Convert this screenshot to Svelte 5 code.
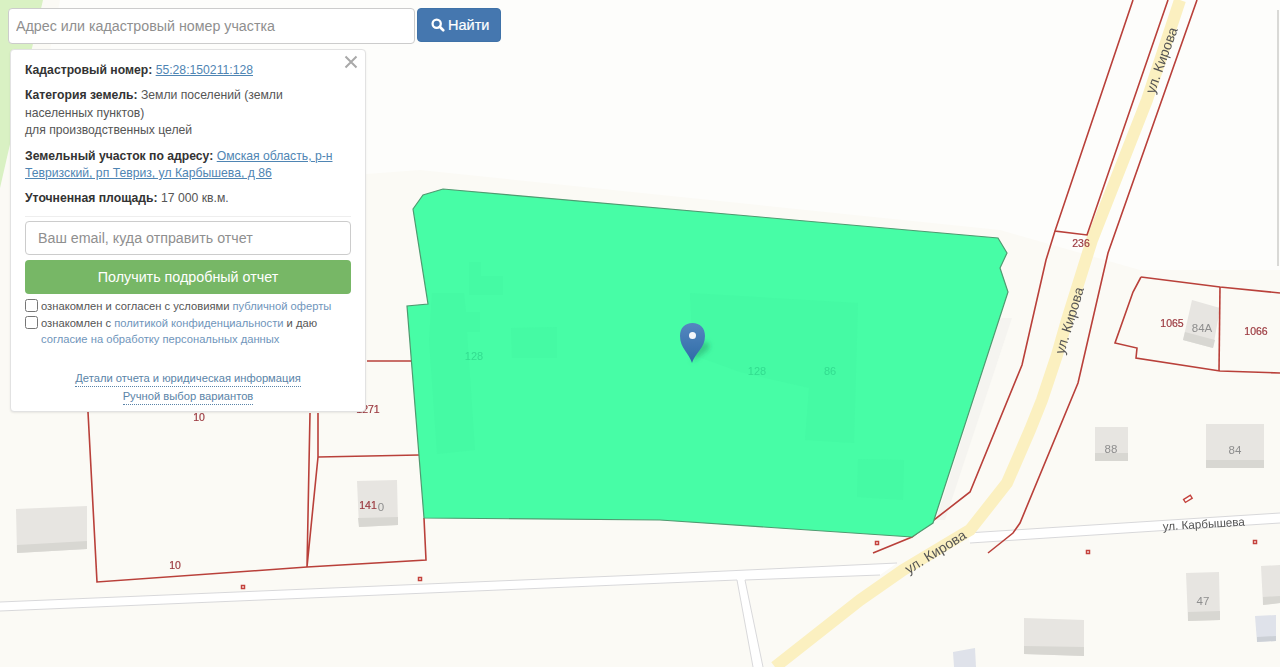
<script>
  const parcels = [
    '1133,0 1055,231 1087,235 1168,0',
    '1055,231 1046,260 1022,365 970,492 912,537 873,553',
    '1197,0 1108,253 1078,383 1020,523 1013,533 988,553',
    '1141,277 1220,287 1280,293',
    '1141,277 1133,292 1115,343 1137,348 1136,358 1220,371 1280,373',
    '1220,287 1219,371',
    '88,412 97,582 307,567 426,560 424,518',
    '310,413 307,567 318,457 318,413',
    '318,457 419,455',
    '367,361 413,361'
  ];
  const buildings = [
    { top: '1192,300 1220,308 1213,348 1183,340', strip: '1185,332 1215,340 1213,348 1183,340' },
    { top: '1095,427 1128,427 1128,461 1095,461', strip: '1095,453 1128,453 1128,461 1095,461' },
    { top: '1206,424 1264,424 1264,468 1206,468', strip: '1206,460 1264,460 1264,468 1206,468' },
    { top: '1186,573 1219,572 1220,620 1188,621', strip: '1188,612 1220,611 1220,620 1188,621' },
    { top: '1261,566 1280,565 1280,603 1263,605', strip: '1263,597 1280,596 1280,603 1263,605' },
    { top: '1024,618 1084,620 1084,656 1024,654', strip: '1024,646 1084,647 1084,656 1024,654' },
    { top: '16,509 87,506 87,549 17,553', strip: '17,545 87,541 87,549 17,553' },
    { top: '357,481 397,480 398,525 359,527', strip: '358,518 398,517 398,525 359,527' }
  ];
  const bluish = [
    { top: '1255,616 1276,615 1276,641 1257,642', strip: '1257,637 1276,636 1276,641 1257,642' },
    { top: '953,652 975,648 976,667 954,667', strip: '' }
  ];
  const ghosts = [
    '469,262 481,262 481,276 503,276 503,295 469,295',
    '432,293 464,293 466,312 480,312 480,332 467,332 475,450 437,454 429,340',
    '511,328 557,327 557,358 512,358',
    '690,293 858,303 854,443 805,440 809,388 740,372 693,355',
    '858,459 904,460 903,500 857,497'
  ];
  const marks = [[243, 587], [420, 579], [877, 543], [1088, 552], [1255, 542]];
  const labels = [
    { x: 1081, y: 247, text: '236', c: 'red' },
    { x: 1172, y: 327, text: '1065', c: 'red' },
    { x: 1256, y: 335, text: '1066', c: 'red' },
    { x: 199, y: 421, text: '10', c: 'red' },
    { x: 175, y: 569, text: '10', c: 'red' },
    { x: 368, y: 413, text: '1271', c: 'red' },
    { x: 368, y: 509, text: '141', c: 'red' },
    { x: 1202, y: 332, text: '84А', c: 'house' },
    { x: 1111, y: 453, text: '88', c: 'house' },
    { x: 1235, y: 454, text: '84', c: 'house' },
    { x: 1203, y: 605, text: '47', c: 'house' },
    { x: 381, y: 511, text: '0', c: 'house' },
    { x: 474, y: 360, text: '128', c: 'ghost' },
    { x: 757, y: 375, text: '128', c: 'ghost' },
    { x: 830, y: 375, text: '86', c: 'ghost' }
  ];
  const streets = [
    { x: 1166, y: 62, a: -70, size: 14, text: 'ул. Кирова' },
    { x: 1074, y: 322, a: -73, size: 14, text: 'ул. Кирова' },
    { x: 938, y: 556, a: -32, size: 14, text: 'ул. Кирова' },
    { x: 1204, y: 528, a: -3.5, size: 11.7, text: 'ул. Карбышева' }
  ];
</script>

<div class="page">
  <svg class="map" viewBox="0 0 1280 667" aria-hidden="true">
    <defs>
      <linearGradient id="pin" x1="0" y1="0" x2="0" y2="1">
        <stop offset="0" stop-color="#5587c0" />
        <stop offset="1" stop-color="#2e6ba6" />
      </linearGradient>
      <filter id="soft" x="-50%" y="-50%" width="200%" height="200%">
        <feGaussianBlur stdDeviation="2.5" />
      </filter>
    </defs>

    <rect width="1280" height="667" fill="#fbfaf5" />
    <polygon points="60,0 1280,0 1280,270 1140,270 1000,230 420,170 20,200" fill="#fdfdfb" />
    <polygon points="0,0 43,0 0,188" fill="#d9f1c3" />
    <polygon points="1000,318 1012,318 945,520 936,520" fill="#f5f4f0" />
    <polyline points="1278,10 1278,266" fill="none" stroke="#d9d9d6" stroke-width="2" />

    <!-- street casings -->
    <polygon points="0,602 640,575 897,563 880,575 745,580 0,611" fill="#ffffff" />
    <polyline points="0,602 640,575 897,563" fill="none" stroke="#d8d8da" />
    <polyline points="0,611 737,580" fill="none" stroke="#d8d8da" />
    <polyline points="745,580 880,575" fill="none" stroke="#d8d8da" />
    <polygon points="967,533 1280,513 1280,523 970,543" fill="#ffffff" />
    <polyline points="967,533 1280,513" fill="none" stroke="#d8d8da" />
    <polyline points="970,543 1280,523" fill="none" stroke="#d8d8da" />
    <polygon points="737,580 745,580 763,667 753,667" fill="#ffffff" />
    <polyline points="737,580 753,667" fill="none" stroke="#d8d8da" />
    <polyline points="745,580 763,667" fill="none" stroke="#d8d8da" />

    <polyline
      points="1180,0 1147,100 1092,240 1067,320 1057,355 1042,400 1030,430 1007,483 970,530 903,570 860,600 775,667"
      fill="none"
      stroke="#fbf0c0"
      stroke-width="12"
    />

    {#each buildings as b}
      <polygon points={b.top} fill="#e7e5e1" />
      <polygon points={b.strip} fill="#d8d7d2" />
    {/each}
    {#each bluish as b}
      <polygon points={b.top} fill="#dfe2ea" />
      {#if b.strip}<polygon points={b.strip} fill="#ccd0d6" />{/if}
    {/each}

    {#each parcels as p}
      <polyline points={p} fill="none" stroke="#b9403a" stroke-width="1.6" />
    {/each}
    {#each marks as [x, y]}
      <rect x={x - 1.5} y={y - 1.5} width="3" height="3" fill="#fff" stroke="#c4423c" stroke-width="1.5" />
    {/each}
    <rect x="1184" y="497" width="8" height="3.5" transform="rotate(-32 1188 499)" fill="#fff" stroke="#c4423c" stroke-width="1.4" />

    <!-- selected parcel -->
    <polygon
      points="413,209 423,195 443,189 998,238 1007,253 1000,268 1008,292 933,523 912,537 660,520 424,518 407,306 428,304"
      fill="#47fda6"
      stroke="#4f9a70"
      stroke-width="1.2"
    />
    {#each ghosts as g}
      <polygon points={g} fill="#3ef39e" fill-opacity="0.25" />
    {/each}

    {#each labels as l}
      <text class={l.c} x={l.x} y={l.y} text-anchor="middle">{l.text}</text>
    {/each}
    {#each streets as s}
      <text class="street" style={`font-size: ${s.size}px`} text-anchor="middle" transform={`translate(${s.x} ${s.y}) rotate(${s.a})`}>{s.text}</text>
    {/each}

    <!-- marker -->
    <path d="M692 362 L708 350 Q712 344 706 342 L696 342 Z" fill="#26a870" fill-opacity="0.55" filter="url(#soft)" />
    <path d="M692 363 C689 353 680 348 680 336 C680 328 685 323 692.500 323 C700 323 705 328 705 336 C705 348 695 353 692 363 Z" fill="url(#pin)" />
    <circle cx="692.500" cy="335.500" r="3.500" fill="#f4f7fb" />
  </svg>

  <form class="search" on:submit|preventDefault>
    <input class="search-input" type="text" placeholder="Адрес или кадастровый номер участка" />
    <button class="search-btn" type="submit">
      <svg viewBox="0 0 16 16" aria-hidden="true">
        <circle cx="6.500" cy="6.500" r="4.700" fill="none" stroke="currentColor" stroke-width="2.600" />
        <path d="M10 10l4 4" stroke="currentColor" stroke-width="3" stroke-linecap="round" />
      </svg>
      Найти
    </button>
  </form>

  <div class="panel">
    <button class="close" type="button" aria-label="Закрыть">
      <svg viewBox="0 0 14 14" aria-hidden="true">
        <path d="M1.500 1.500l11 11M12.500 1.500l-11 11" stroke="currentColor" stroke-width="2" />
      </svg>
    </button>
    <p><b>Кадастровый номер:</b> <a href="#n">55:28:150211:128</a></p>
    <p><b>Категория земель:</b> Земли поселений (земли<br />населенных пунктов)<br />для производственных целей</p>
    <p><b>Земельный участок по адресу:</b> <a href="#a">Омская область, р-н Тевризский, рп Тевриз, ул Карбышева, д 86</a></p>
    <p><b>Уточненная площадь:</b> 17 000 кв.м.</p>
    <hr />
    <input class="email" type="text" placeholder="Ваш email, куда отправить отчет" />
    <button class="report" type="button">Получить подробный отчет</button>
    <label class="check">
      <input type="checkbox" />
      <span>ознакомлен и согласен с условиями <a href="#o">публичной оферты</a></span>
    </label>
    <label class="check">
      <input type="checkbox" />
      <span>ознакомлен с <a href="#p">политикой конфиденциальности</a> и даю <a href="#s">согласие на обработку персональных данных</a></span>
    </label>
    <div class="more">
      <a href="#d">Детали отчета и юридическая информация</a>
      <a href="#m">Ручной выбор вариантов</a>
    </div>
  </div>
</div>

<style>
  :global(body) {
    margin: 0;
    overflow: hidden;
  }

  .page {
    position: relative;
    width: 1280px;
    height: 667px;
    overflow: hidden;
    font-family: "Liberation Sans", Arial, sans-serif;
    color: #555;
  }

  .map {
    position: absolute;
    inset: 0;
    width: 1280px;
    height: 667px;
    filter: blur(0.4px);
  }

  .map text {
    font-family: "Liberation Sans", Arial, sans-serif;
    font-size: 11px;
  }

  .map .red {
    fill: #9c3a40;
    font-size: 10.500px;
    stroke: #9c3a40;
    stroke-width: 0.200px;
  }

  .map .house {
    fill: #8e8e8e;
    font-size: 11.500px;
  }

  .map .ghost {
    fill: #33dc90;
  }

  .map .street {
    fill: #555;
  }

  .search {
    position: absolute;
    left: 8px;
    top: 8px;
    display: flex;
    gap: 2px;
    align-items: flex-start;
  }

  .search-input {
    box-sizing: border-box;
    width: 407px;
    height: 36px;
    padding: 0 7px;
    border: 1px solid #ccc;
    border-radius: 4px;
    background: #fff;
    font: 14.250px "Liberation Sans", Arial, sans-serif;
    color: #444;
  }

  .search-input::placeholder,
  .email::placeholder {
    color: #8f8f8f;
    opacity: 1;
  }

  .search-btn {
    display: flex;
    align-items: center;
    gap: 3px;
    width: 84px;
    height: 34px;
    padding: 0 0 0 13px;
    border: 1px solid #3f72a8;
    border-radius: 4px;
    background: #4577af;
    color: #fff;
    font: 14.500px "Liberation Sans", Arial, sans-serif;
    -webkit-text-stroke: 0.2px #fff;
  }

  .search-btn svg {
    width: 14px;
    height: 14px;
  }

  .panel {
    position: absolute;
    left: 10px;
    top: 49px;
    box-sizing: border-box;
    width: 356px;
    height: 363px;
    padding: 12px 14px 0;
    background: #fff;
    border: 1px solid #e2e2e2;
    border-radius: 4px;
    box-shadow: 0 1px 2px rgba(0, 0, 0, 0.08);
    font-size: 12.200px;
    line-height: 17.500px;
  }

  .panel p {
    margin: 0 0 7.800px;
  }

  .panel b {
    color: #333;
  }

  .panel p a {
    color: #4f85b3;
    text-decoration: underline;
  }

  .close {
    position: absolute;
    right: 7px;
    top: 5px;
    width: 14px;
    height: 14px;
    padding: 0;
    border: 0;
    background: none;
    color: #a9a9a9;
  }

  hr {
    margin: 0 0 4.200px;
    border: 0;
    border-top: 1px solid #eee;
  }

  .email {
    display: block;
    box-sizing: border-box;
    width: 100%;
    height: 34px;
    padding: 0 12px;
    border: 1px solid #ccc;
    border-radius: 4px;
    font: 14.250px "Liberation Sans", Arial, sans-serif;
  }

  .report {
    display: block;
    width: 100%;
    height: 34px;
    margin-top: 5px;
    padding: 0;
    border: 0;
    border-radius: 4px;
    background: #77b766;
    color: #fff;
    font: 14.300px "Liberation Sans", Arial, sans-serif;
  }

  .check {
    display: flex;
    gap: 3px;
    margin-top: 0.500px;
    font-size: 11.200px;
    line-height: 16.500px;
    color: #555;
  }

  .report + .check {
    margin-top: 4px;
  }

  .check input {
    flex: none;
    width: 13px;
    height: 13px;
    margin: 1px 0 0;
  }

  .check a {
    color: #6f95bb;
    text-decoration: none;
  }

  .more {
    display: flex;
    flex-direction: column;
    align-items: center;
    gap: 1px;
    margin-top: 23px;
    font-size: 11.200px;
  }

  .more a {
    color: #5a84a8;
    text-decoration: none;
    border-bottom: 1px dotted #5a84a8;
    line-height: 15px;
    margin-bottom: 1px;
  }
</style>
